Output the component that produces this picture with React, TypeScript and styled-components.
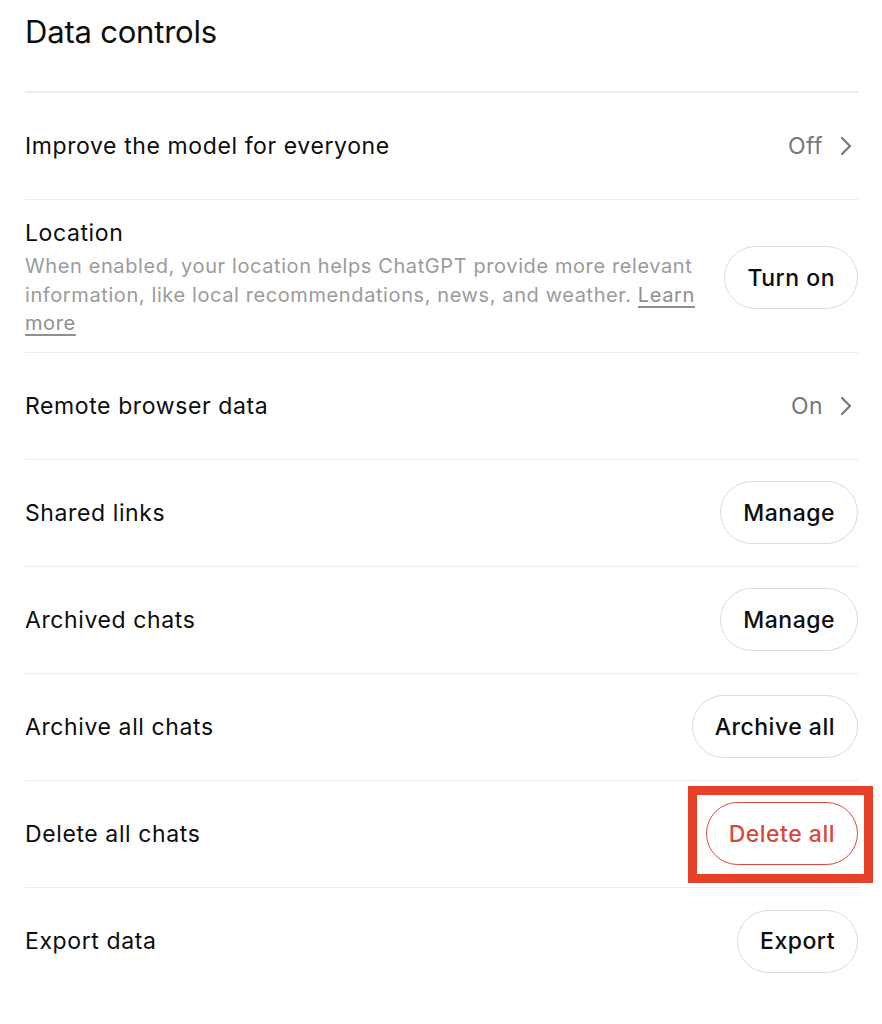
import styled, { createGlobalStyle } from "styled-components";

const Global = createGlobalStyle`
    body {
        margin: 0;
        background: #fff;
        font-family: Inter, "Noto Sans", sans-serif;
        color: #0d0d0d;
    }
`;

const Page = styled.main`
    width: 833px;
    padding: 0 0 0 25px;
`;

const Titulo = styled.h1`
    margin: 0;
    height: 93px;
    padding-top: 12px;
    box-sizing: border-box;
    font-size: 31px;
    line-height: 40px;
    font-weight: 400;
    letter-spacing: -0.2px;
    border-bottom: 2px solid #ececec;
`;

const Fila = styled.div<{ $tall?: boolean }>`
    display: flex;
    align-items: center;
    justify-content: space-between;
    gap: 28px;
    min-height: 107px;
    box-sizing: border-box;
    padding: ${(p) => (p.$tall ? "18px 0 14px" : "0")};
    border-bottom: 1px solid #ececec;
    &:last-child {
        border-bottom: none;
    }
`;

const Etiqueta = styled.div`
    font-size: 23px;
    line-height: 30px;
    letter-spacing: 0.6px;
`;

const Texto = styled.div`
    flex: 1;
    max-width: 675px;
`;

const Descripcion = styled.p`
    margin: 4px 0 0;
    font-size: 20px;
    line-height: 28.5px;
    letter-spacing: 0.6px;
    color: #9b9b9b;
    a {
        color: #8f8f8f;
        text-decoration: underline;
        text-underline-offset: 4px;
    }
`;

const Valor = styled.div`
    display: flex;
    align-items: center;
    gap: 17px;
    font-size: 23px;
    letter-spacing: 0.4px;
    color: #777;
    padding-right: 6px;
`;

const Boton = styled.button<{ $danger?: boolean }>`
    height: 63px;
    padding: 0 22px;
    border-radius: 999px;
    background: #fff;
    border: 1.5px solid ${(p) => (p.$danger ? "#d9483d" : "#dadada")};
    color: ${(p) => (p.$danger ? "#d9483d" : "#0d0d0d")};
    font-family: Inter, "Noto Sans", sans-serif;
    font-size: 23px;
    font-weight: 500;
    letter-spacing: 0.5px;
    white-space: nowrap;
    flex-shrink: 0;
`;

const Marcado = styled.div`
    position: relative;
    &::after {
        content: "";
        position: absolute;
        left: -18px;
        top: -16px;
        right: -15px;
        bottom: -18px;
        border: 9px solid #e8412a;
        pointer-events: none;
    }
`;

function Chevron() {
    return (
        <svg width="12" height="20" viewBox="0 0 12 20" fill="none">
            <path d="M2 2l8 8-8 8" stroke="#777" strokeWidth="2.2" strokeLinecap="round" strokeLinejoin="round" />
        </svg>
    );
}

export default function App(): JSX.Element {
    return (
        <Page>
            <Global />
            <Titulo>Data controls</Titulo>

            <Fila>
                <Etiqueta>Improve the model for everyone</Etiqueta>
                <Valor>Off <Chevron /></Valor>
            </Fila>

            <Fila $tall>
                <Texto>
                    <Etiqueta>Location</Etiqueta>
                    <Descripcion>
                        When enabled, your location helps ChatGPT provide more relevant information, like local
                        recommendations, news, and weather. <a href="#">Learn more</a>
                    </Descripcion>
                </Texto>
                <Boton>Turn on</Boton>
            </Fila>

            <Fila>
                <Etiqueta>Remote browser data</Etiqueta>
                <Valor>On <Chevron /></Valor>
            </Fila>

            <Fila>
                <Etiqueta>Shared links</Etiqueta>
                <Boton>Manage</Boton>
            </Fila>

            <Fila>
                <Etiqueta>Archived chats</Etiqueta>
                <Boton>Manage</Boton>
            </Fila>

            <Fila>
                <Etiqueta>Archive all chats</Etiqueta>
                <Boton>Archive all</Boton>
            </Fila>

            <Fila>
                <Etiqueta>Delete all chats</Etiqueta>
                <Marcado>
                    <Boton $danger>Delete all</Boton>
                </Marcado>
            </Fila>

            <Fila>
                <Etiqueta>Export data</Etiqueta>
                <Boton>Export</Boton>
            </Fila>
        </Page>
    );
}
